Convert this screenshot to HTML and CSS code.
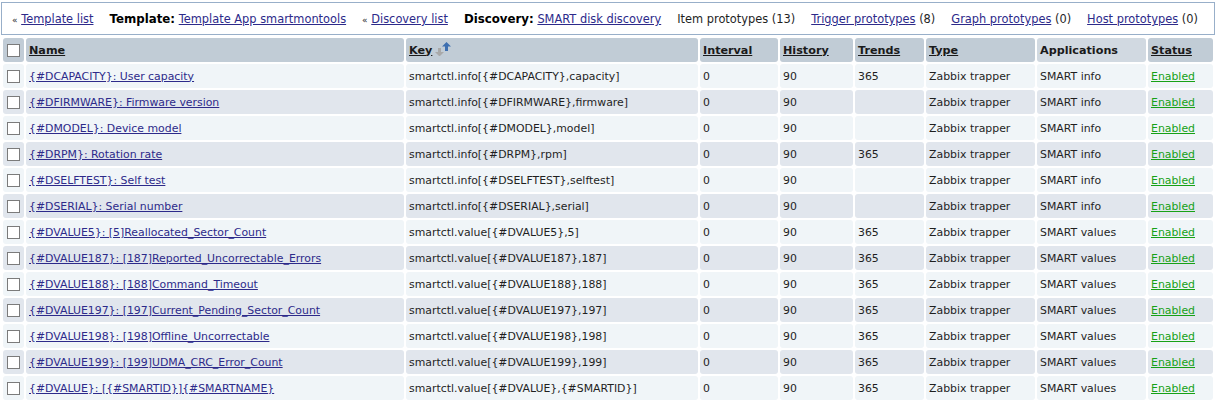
FILE: index.html
```html
<!DOCTYPE html>
<html>
<head>
<meta charset="utf-8">
<link rel="stylesheet" href="styles.css">
</head>
<body>
<div class="page">
  <div class="navbar">
    <span class="crumb"><span class="raquo">«</span> <a href="#">Template list</a></span>
    <span class="crumb"><b>Template:</b> <a href="#">Template App smartmontools</a></span>
    <span class="crumb"><span class="raquo">«</span> <a href="#">Discovery list</a></span>
    <span class="crumb"><b>Discovery:</b> <a href="#">SMART disk discovery</a></span>
    <span class="crumb">Item prototypes (13)</span>
    <span class="crumb"><a href="#">Trigger prototypes</a> (8)</span>
    <span class="crumb"><a href="#">Graph prototypes</a> (0)</span>
    <span class="crumb"><a href="#">Host prototypes</a> (0)</span>
  </div>
  <table class="list">
    <colgroup>
      <col class="c-chk"><col class="c-name"><col class="c-key"><col class="c-int"><col class="c-hist"><col class="c-trend"><col class="c-type"><col class="c-app"><col class="c-stat">
    </colgroup>
    <thead>
      <tr>
        <th class="chk"><input type="checkbox" class="cb"></th>
        <th><a href="#">Name</a></th>
        <th><a href="#">Key</a><svg class="sort" width="22" height="14" viewBox="0 0 22 14"><path d="M5 6h3v4h3l-4.5 4.5L2 10h3z" fill="#a9a9a9"/><path d="M12 9h3V4.5h3L13.5 0 9 4.5h3z" fill="#3e6fb0"/></svg></th>
        <th><a href="#">Interval</a></th>
        <th><a href="#">History</a></th>
        <th><a href="#">Trends</a></th>
        <th><a href="#">Type</a></th>
        <th class="plain">Applications</th>
        <th><a href="#">Status</a></th>
      </tr>
    </thead>
    <tbody>
      <tr class="odd"><td class="chk"><input type="checkbox" class="cb"></td><td><a href="#">{#DCAPACITY}: User capacity</a></td><td>smartctl.info[{#DCAPACITY},capacity]</td><td>0</td><td>90</td><td>365</td><td>Zabbix trapper</td><td>SMART info</td><td><a class="on" href="#">Enabled</a></td></tr>
      <tr class="even"><td class="chk"><input type="checkbox" class="cb"></td><td><a href="#">{#DFIRMWARE}: Firmware version</a></td><td>smartctl.info[{#DFIRMWARE},firmware]</td><td>0</td><td>90</td><td></td><td>Zabbix trapper</td><td>SMART info</td><td><a class="on" href="#">Enabled</a></td></tr>
      <tr class="odd"><td class="chk"><input type="checkbox" class="cb"></td><td><a href="#">{#DMODEL}: Device model</a></td><td>smartctl.info[{#DMODEL},model]</td><td>0</td><td>90</td><td></td><td>Zabbix trapper</td><td>SMART info</td><td><a class="on" href="#">Enabled</a></td></tr>
      <tr class="even"><td class="chk"><input type="checkbox" class="cb"></td><td><a href="#">{#DRPM}: Rotation rate</a></td><td>smartctl.info[{#DRPM},rpm]</td><td>0</td><td>90</td><td>365</td><td>Zabbix trapper</td><td>SMART info</td><td><a class="on" href="#">Enabled</a></td></tr>
      <tr class="odd"><td class="chk"><input type="checkbox" class="cb"></td><td><a href="#">{#DSELFTEST}: Self test</a></td><td>smartctl.info[{#DSELFTEST},selftest]</td><td>0</td><td>90</td><td></td><td>Zabbix trapper</td><td>SMART info</td><td><a class="on" href="#">Enabled</a></td></tr>
      <tr class="even"><td class="chk"><input type="checkbox" class="cb"></td><td><a href="#">{#DSERIAL}: Serial number</a></td><td>smartctl.info[{#DSERIAL},serial]</td><td>0</td><td>90</td><td></td><td>Zabbix trapper</td><td>SMART info</td><td><a class="on" href="#">Enabled</a></td></tr>
      <tr class="odd"><td class="chk"><input type="checkbox" class="cb"></td><td><a href="#">{#DVALUE5}: [5]Reallocated_Sector_Count</a></td><td>smartctl.value[{#DVALUE5},5]</td><td>0</td><td>90</td><td>365</td><td>Zabbix trapper</td><td>SMART values</td><td><a class="on" href="#">Enabled</a></td></tr>
      <tr class="even"><td class="chk"><input type="checkbox" class="cb"></td><td><a href="#">{#DVALUE187}: [187]Reported_Uncorrectable_Errors</a></td><td>smartctl.value[{#DVALUE187},187]</td><td>0</td><td>90</td><td>365</td><td>Zabbix trapper</td><td>SMART values</td><td><a class="on" href="#">Enabled</a></td></tr>
      <tr class="odd"><td class="chk"><input type="checkbox" class="cb"></td><td><a href="#">{#DVALUE188}: [188]Command_Timeout</a></td><td>smartctl.value[{#DVALUE188},188]</td><td>0</td><td>90</td><td>365</td><td>Zabbix trapper</td><td>SMART values</td><td><a class="on" href="#">Enabled</a></td></tr>
      <tr class="even"><td class="chk"><input type="checkbox" class="cb"></td><td><a href="#">{#DVALUE197}: [197]Current_Pending_Sector_Count</a></td><td>smartctl.value[{#DVALUE197},197]</td><td>0</td><td>90</td><td>365</td><td>Zabbix trapper</td><td>SMART values</td><td><a class="on" href="#">Enabled</a></td></tr>
      <tr class="odd"><td class="chk"><input type="checkbox" class="cb"></td><td><a href="#">{#DVALUE198}: [198]Offline_Uncorrectable</a></td><td>smartctl.value[{#DVALUE198},198]</td><td>0</td><td>90</td><td>365</td><td>Zabbix trapper</td><td>SMART values</td><td><a class="on" href="#">Enabled</a></td></tr>
      <tr class="even"><td class="chk"><input type="checkbox" class="cb"></td><td><a href="#">{#DVALUE199}: [199]UDMA_CRC_Error_Count</a></td><td>smartctl.value[{#DVALUE199},199]</td><td>0</td><td>90</td><td>365</td><td>Zabbix trapper</td><td>SMART values</td><td><a class="on" href="#">Enabled</a></td></tr>
      <tr class="odd"><td class="chk"><input type="checkbox" class="cb"></td><td><a href="#">{#DVALUE}: [{#SMARTID}]{#SMARTNAME}</a></td><td>smartctl.value[{#DVALUE},{#SMARTID}]</td><td>0</td><td>90</td><td>365</td><td>Zabbix trapper</td><td>SMART values</td><td><a class="on" href="#">Enabled</a></td></tr>
    </tbody>
  </table>
</div>
</body>
</html>
```

FILE: styles.css
```css
html, body {
  margin: 0;
  padding: 0;
  background: #ffffff;
}
body {
  font-family: "DejaVu Sans", Verdana, sans-serif;
  font-size: 10.9px;
  color: #1f1f1f;
}
.page {
  padding: 2px 1px 0 1px;
}
.navbar {
  height: 28px;
  border: 1px solid #98afc9;
  background: #ffffff;
  display: flex;
  align-items: center;
  gap: 16px;
  padding: 3px 10px 0 10px;
  box-sizing: content-box;
  font-size: 11.4px;
  white-space: nowrap;
}
.navbar .crumb {
  line-height: 1;
}
.navbar b {
  font-size: 11.8px;
  font-weight: bold;
  color: #000;
}
.raquo {
  font-size: 9px;
}
a {
  color: #2d2a8a;
  text-decoration: underline;
}
.list {
  width: 100%;
  margin-top: 1px;
  border-collapse: separate;
  border-spacing: 2px;
  table-layout: fixed;
}
.c-chk { width: 21px; }
.c-name { width: 378px; }
.c-key { width: 292px; }
.c-int { width: 78px; }
.c-hist { width: 73px; }
.c-trend { width: 69px; }
.c-type { width: 109px; }
.c-app { width: 109px; }
.c-stat { width: 65px; }
.list th, .list td {
  border-radius: 3px;
  padding: 0 3px;
  text-align: left;
  white-space: nowrap;
  overflow: hidden;
}
.list th {
  height: 24px;
  background: #c1ccd6;
  font-size: 11.2px;
  font-weight: bold;
}
.list th a {
  color: #1a1a1a;
}
.list th.plain {
  background: #d1d9e1;
  color: #1a1a1a;
}
.list td {
  height: 24px;
}
.list tr.odd td {
  background: #f0f5f8;
}
.list tr.even td {
  background: #e1e6ed;
}
.list .chk {
  padding: 0;
  text-align: center;
}
.cb {
  appearance: none;
  -webkit-appearance: none;
  width: 13px;
  height: 13px;
  margin: 0;
  border: 1px solid #7b7b7b;
  background: #fff;
  vertical-align: middle;
  display: inline-block;
}
.sort {
  vertical-align: top;
  margin-left: 1px;
  margin-top: -2px;
}
a.on {
  color: #16a116;
}
```
